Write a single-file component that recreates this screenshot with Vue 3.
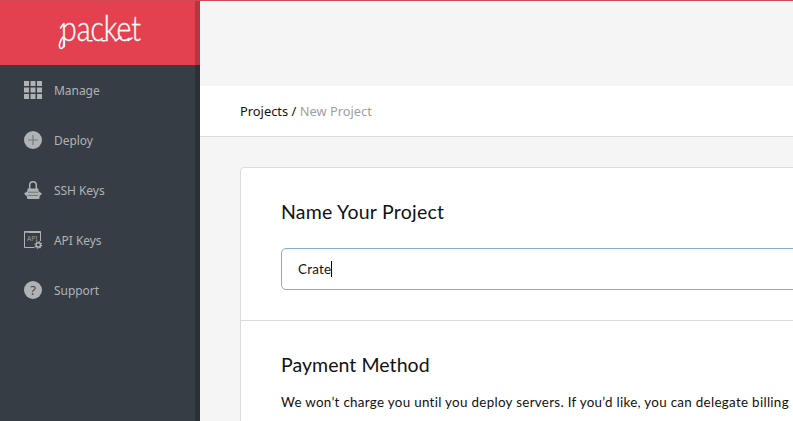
<script setup>
import { ref } from 'vue'

const items = [
  { id: 'manage', label: 'Manage' },
  { id: 'deploy', label: 'Deploy' },
  { id: 'ssh', label: 'SSH Keys' },
  { id: 'api', label: 'API Keys' },
  { id: 'support', label: 'Support' },
]
const name = ref('Crate')
</script>

<template>
  <div class="shell">
    <aside class="sidebar">
      <div class="brand">
        <svg class="logo" width="90" height="40" viewBox="0 0 90 40" role="img" aria-label="packet">
          <text x="6" y="28" textLength="80" lengthAdjust="spacingAndGlyphs">packet</text>
          <path d="M8.3 24C4.5 27 3 35 6 35.5C9 35.5 9.3 31 9.3 28M5.5 15L8 11.5M34 27.7H37M47 27.7H50M60.5 27.7L66 24M73 27.5L77 25" />
        </svg>
      </div>
      <nav class="nav">
        <a v-for="item in items" :key="item.id" class="item">
          <svg class="icon" width="18" height="18" viewBox="0 0 18 18">
            <g v-if="item.id === 'manage'" fill="currentColor">
              <path d="M0 0h5v5H0zM6.5 0h5v5h-5zM13 0h5v5h-5zM0 6.5h5v5H0zM6.5 6.5h5v5h-5zM13 6.5h5v5h-5zM0 13h5v5H0zM6.5 13h5v5h-5zM13 13h5v5h-5z" />
            </g>
            <g v-else-if="item.id === 'deploy'">
              <circle cx="9" cy="9" r="9" fill="currentColor" />
              <path d="M9 4v10M4 9h10" stroke="#737980" stroke-width="1.2" />
            </g>
            <g v-else-if="item.id === 'ssh'">
              <path d="M5.7 8V4.2C5.7 -.5 12.3 -.5 12.3 4.2V8" fill="none" stroke="currentColor" stroke-width="1.5" />
              <path d="M3.5 7.5h11v2.6L18 12.7l-2.5 2.6V17q0 1-1 1H4q-1 0-1-1v-1.5L0 12.7l3.5-2.6z" fill="currentColor" />
              <path d="M4 11.2H14.5M3.5 14.4H14" stroke="#646a71" stroke-width=".9" />
            </g>
            <g v-else-if="item.id === 'api'">
              <path d="M10.5 16.5H.5V.5h16v9.5" fill="none" stroke="currentColor" stroke-width="1" />
              <path d="M.5 1.2h16" stroke="currentColor" stroke-width="1.6" />
              <path d="M1.5 1.4h1M3.5 1.4h1" stroke="#555b63" stroke-width=".8" />
              <text class="api-text" x="3" y="10" textLength="10.5" lengthAdjust="spacingAndGlyphs">API</text>
              <circle cx="14.3" cy="13.9" r="3.7" fill="#373d45" />
              <circle cx="14.3" cy="13.9" r="2.2" fill="none" stroke="currentColor" stroke-width="1.5" />
              <circle cx="14.3" cy="13.9" r="3.3" fill="none" stroke="currentColor" stroke-width="1.2" stroke-dasharray="1.3 1.29" />
            </g>
            <g v-else>
              <circle cx="9" cy="9" r="9" fill="currentColor" />
              <text class="question" x="9" y="13.6" text-anchor="middle">?</text>
            </g>
          </svg>
          <span>{{ item.label }}</span>
        </a>
      </nav>
    </aside>
    <main class="main">
      <header class="crumbs"><span>Projects /</span><span class="current">New Project</span></header>
      <div class="card">
        <section class="section first">
          <h2 class="title name-title">Name Your Project</h2>
          <div class="field"><span class="value">{{ name }}</span><i class="caret"></i></div>
        </section>
        <section class="section second">
          <h2 class="title pay-title">Payment Method</h2>
          <p class="note">We won’t charge you until you deploy servers. If you’d like, you can delegate billing</p>
        </section>
      </div>
    </main>
  </div>
</template>

<style>
body { margin: 0; overflow: hidden; }
</style>

<style scoped>
* { box-sizing: border-box; }
.shell {
  width: 100vw;
  height: 421px;
  display: flex;
  overflow: hidden;
  border-top: 1px solid #d34653;
  background: #f5f5f5;
  font-family: "Noto Sans", sans-serif;
}
.sidebar {
  flex: 0 0 200px;
  background: linear-gradient(90deg, #373d45 195px, #2c3037 195px);
}
.brand {
  height: 64px;
  padding: 12px 0 0 55px;
  background: linear-gradient(90deg, #e3414f 195px, #b7353f 195px);
}
.logo { display: block; overflow: visible; }
.logo text { font: 300 35px Lato, sans-serif; fill: #fff; stroke: #fff; stroke-width: .35px; }
.logo path { fill: none; stroke: #fff; stroke-width: 1.6; stroke-linecap: round; }
.nav { display: flex; flex-direction: column; }
.item {
  height: 50px;
  display: flex;
  align-items: center;
  gap: 12px;
  padding-left: 24px;
  color: #b0b3b6;
  font-size: 12px;
  letter-spacing: -.05px;
}
.icon { flex: none; overflow: visible; letter-spacing: 0; }
.api-text { font: 6.8px "Noto Sans", sans-serif; fill: #999da1; }
.question { font: 13px "Noto Sans", sans-serif; fill: #41474f; }
.main { flex: 1; min-width: 0; padding-top: 85px; }
.crumbs {
  height: 51px;
  display: flex;
  align-items: center;
  gap: 3.5px;
  padding-left: 40px;
  border-bottom: 1px solid #dbdbdb;
  background: #fff;
  color: #111;
  font-size: 12.85px;
}
.current { color: #a0a0a0; }
.card {
  width: 640px;
  margin: 30px 0 0 40px;
  border: 1px solid #dbdbdb;
  border-radius: 4px;
  background: #fff;
  color: #111;
  font-family: Lato, sans-serif;
}
.section { padding-left: 40px; }
.first { height: 153px; padding-top: 31px; border-bottom: 1px solid #dbdbdb; }
.second { height: 140px; padding-top: 31px; }
.title { margin: 0; font-size: 19.5px; line-height: 26px; font-weight: 400; white-space: nowrap; }
.name-title { letter-spacing: .25px; }
.pay-title { letter-spacing: .06px; }
.field {
  height: 42px;
  margin-top: 23px;
  padding: 0 0 1px 16px;
  display: flex;
  align-items: center;
  border: 1px solid #81b0cc;
  border-radius: 5px;
  font-size: 13.4px;
}
.value { letter-spacing: .25px; }
.caret { width: 1px; height: 16px; background: #000; }
.note { margin: 14px 0 0; font-size: 13.4px; line-height: 20px; white-space: nowrap; letter-spacing: .3px; }
</style>
